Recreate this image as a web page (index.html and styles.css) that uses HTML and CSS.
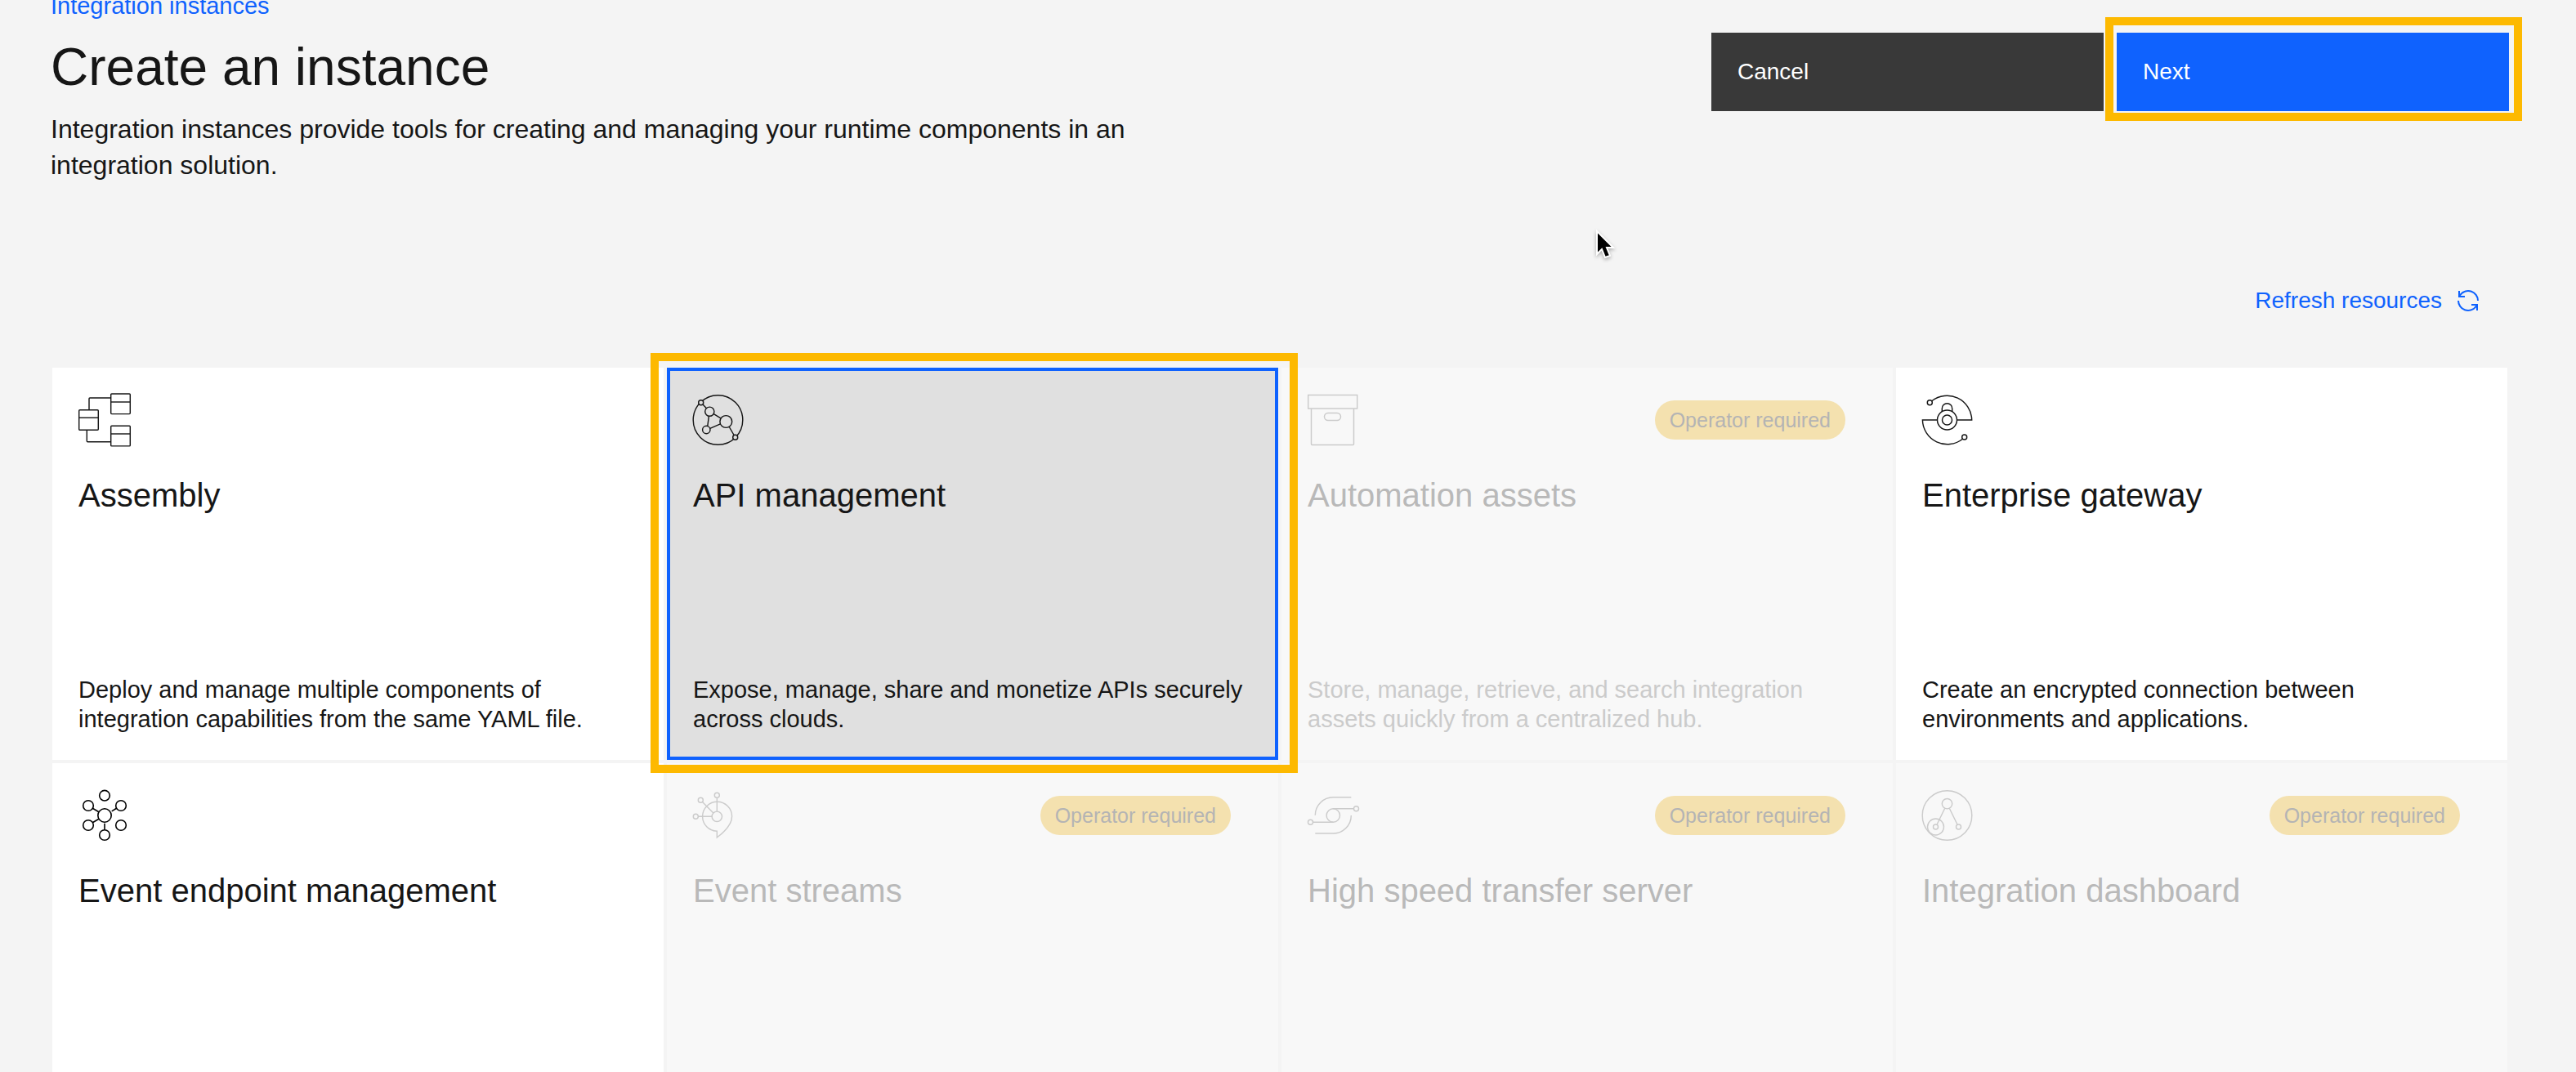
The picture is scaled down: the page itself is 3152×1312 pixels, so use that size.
FILE: index.html
```html
<!DOCTYPE html>
<html lang="en">
<head>
<meta charset="utf-8">
<title>Create an instance</title>
<link rel="stylesheet" href="styles.css">
</head>
<body>
<main class="page">
  <header class="header">
    <div class="intro">
      <nav class="breadcrumb"><a href="#">Integration instances</a></nav>
      <h1 class="title">Create an instance</h1>
      <p class="lead">Integration instances provide tools for creating and managing your runtime components in an integration solution.</p>
    </div>
    <div class="actions">
      <button class="btn btn-secondary" type="button">Cancel</button>
      <div class="spot">
        <button class="btn btn-primary" type="button">Next</button>
        <span class="frame frame-button"></span>
      </div>
    </div>
  </header>

  <div class="toolbar">
    <button class="refresh" type="button">
      Refresh resources
      <svg class="refresh-icon" viewBox="0 0 32 32" aria-hidden="true"><path d="M12,10H6.78A11,11,0,0,1,27,16h2A13,13,0,0,0,6,7.68V4H4v8h8Z"/><path d="M20,22h5.22A11,11,0,0,1,5,16H3a13,13,0,0,0,23,8.32V28h2V20H20Z"/></svg>
    </button>
  </div>

  <section class="tiles">
    <button class="tile" type="button">
      <span class="tile-top">
        <svg class="icon" viewBox="0 0 64 64" aria-hidden="true">
          <rect x=".7" y="19.7" width="23.6" height="24.6" rx="1"/><path d="M.7 29.3h23.6"/>
          <rect x="39.7" y="0" width="23.6" height="24.6" rx="1"/><path d="M39.7 10h23.6"/>
          <rect x="39.7" y="39.3" width="23.6" height="24.6" rx="1"/><path d="M39.7 49h23.6"/>
          <path d="M13 19.7V6q0-1 1-1h25.7M10.3 44.3v13.4q0 1 1 1h28.4"/>
        </svg>
      </span>
      <span class="tile-title">Assembly</span>
      <span class="tile-text">Deploy and manage multiple components of integration capabilities from the same YAML file.</span>
    </button>

    <div class="spot">
      <button class="tile tile-selected" type="button" aria-pressed="true">
        <span class="tile-top">
          <svg class="icon" viewBox="0 0 64 64" aria-hidden="true">
            <circle cx="30.5" cy="32" r="30.3"/>
            <path d="M12 13l4.3 4.4M25.3 24.6l8.6 5.2M19.4 27.3l-1.6 12M20.8 42.4l12.6-5.6M44.3 40.5l5.8 10"/>
            <circle class="node" cx="9.7" cy="10.7" r="3"/>
            <circle cx="20.3" cy="21.7" r="5.6"/>
            <circle cx="40.3" cy="34" r="7.4"/>
            <circle cx="16.3" cy="44" r="4.7"/>
            <circle class="node" cx="51.7" cy="53.3" r="3"/>
          </svg>
        </span>
        <span class="tile-title">API management</span>
        <span class="tile-text">Expose, manage, share and monetize APIs securely across clouds.</span>
      </button>
      <span class="frame frame-tile"></span>
    </div>

    <button class="tile" type="button" disabled>
      <span class="tile-top">
        <svg class="icon" viewBox="0 0 64 64" aria-hidden="true">
          <rect x=".7" y="1.5" width="60" height="16.5"/>
          <path d="M4.5 18v43.5q0 1 1 1h50q1 0 1-1V18"/>
          <rect x="20.5" y="23.5" width="20" height="9" rx="4.5"/>
        </svg>
        <span class="tag">Operator required</span>
      </span>
      <span class="tile-title">Automation assets</span>
      <span class="tile-text">Store, manage, retrieve, and search integration assets quickly from a centralized hub.</span>
    </button>

    <button class="tile" type="button">
      <span class="tile-top">
        <svg class="icon" viewBox="0 0 64 64" aria-hidden="true">
          <path d="M11.7 8.7A30.3 30.3 0 0 1 60.7 32H42.5M18.5 32H.4A30.3 30.3 0 0 0 49.5 55.2"/>
          <circle cx="30.5" cy="32" r="12"/><circle cx="30.5" cy="32" r="6"/>
          <path d="M24.3 21.5v-3.6a6.2 6.2 0 0 1 12.4 0v3.6"/>
          <circle cx="9.3" cy="10.7" r="3"/><circle cx="51.7" cy="53" r="3"/>
        </svg>
      </span>
      <span class="tile-title">Enterprise gateway</span>
      <span class="tile-text">Create an encrypted connection between environments and applications.</span>
    </button>

    <button class="tile" type="button">
      <span class="tile-top">
        <svg class="icon icon-bold" viewBox="0 0 64 64" aria-hidden="true">
          <circle cx="32" cy="32" r="8.2"/><circle cx="32" cy="7.7" r="6.3"/>
          <circle cx="12" cy="20" r="6.3"/><circle cx="52" cy="20" r="6.3"/>
          <circle cx="12" cy="44" r="6.3"/><circle cx="52" cy="44" r="6.3"/>
          <circle cx="32" cy="56" r="6.3"/>
          <path d="M17.3 23.3l7.7 4.4M40.7 26.9l5.8-3.6M17.3 40.7l7.7-4.4M32 41.7v8"/>
        </svg>
      </span>
      <span class="tile-title">Event endpoint management</span>
    </button>

    <button class="tile" type="button" disabled>
      <span class="tile-top">
        <svg class="icon" viewBox="0 0 64 64" aria-hidden="true">
          <path d="M29.3 51.3A18 18 0 1 1 47.6 33.3C47.6 43 40 51 29.3 59z"/>
          <circle cx="29.3" cy="33.3" r="6.2"/>
          <path d="M29.3 10.3v16.8M11.5 15.5l13.4 13.4M6.3 33.3h16.8"/>
          <circle cx="29.3" cy="7.3" r="3"/><circle cx="9.3" cy="13.3" r="3"/><circle cx="3.3" cy="33.3" r="3"/>
        </svg>
        <span class="tag">Operator required</span>
      </span>
      <span class="tile-title">Event streams</span>
    </button>

    <button class="tile" type="button" disabled>
      <span class="tile-top">
        <svg class="icon" viewBox="0 0 64 64" aria-hidden="true">
          <path d="M9.3 31.7a22 22 0 0 1 22-22h22M53.3 32a22 22 0 0 1-22 22h-22"/>
          <circle cx="31.3" cy="32" r="8.2"/>
          <path d="M31.3 23.8h25.2M6.6 40.2h24.7"/>
          <circle cx="59.5" cy="23.8" r="3"/><circle cx="3.5" cy="40.2" r="3"/>
        </svg>
        <span class="tag">Operator required</span>
      </span>
      <span class="tile-title">High speed transfer server</span>
    </button>

    <button class="tile" type="button" disabled>
      <span class="tile-top">
        <svg class="icon" viewBox="0 0 64 64" aria-hidden="true">
          <circle cx="30.5" cy="32" r="30.3"/><circle cx="30.5" cy="17.7" r="6.2"/>
          <circle cx="16.5" cy="46" r="10"/><circle cx="16.5" cy="46" r="3"/><circle cx="44.5" cy="46" r="3"/>
          <path d="M27.7 23.3L18 43.2M33.3 23.3l9.8 19.9"/>
        </svg>
        <span class="tag">Operator required</span>
      </span>
      <span class="tile-title">Integration dashboard</span>
    </button>
  </section>
</main>
<svg class="pointer" viewBox="0 0 28 42" aria-hidden="true"><path d="M3 4v28l6-6 4 10 6-2-4-10h8z"/></svg>
</body>
</html>
```
FILE: styles.css
```css
* { box-sizing: border-box; }

body {
  margin: 0;
  background: #f4f4f4;
  color: #161616;
  font-family: "Liberation Sans", Arial, sans-serif;
  font-size: 28px;
  line-height: 36px;
}

button {
  margin: 0;
  border: 0;
  font: inherit;
  color: inherit;
  text-align: left;
  cursor: pointer;
}

.page {
  height: 100vh;
  overflow: hidden;
}

/* Header */
.header {
  display: flex;
  justify-content: space-between;
  align-items: flex-start;
  gap: 64px;
  padding: 0 82px 0 62px;
}

.breadcrumb { font-size: 29px; line-height: 14px; }
.breadcrumb a { color: #0f62fe; text-decoration: none; }

.title {
  margin: 28px 0 14px;
  font-size: 64px;
  font-weight: 400;
  line-height: 80px;
}

.lead {
  max-width: 1380px;
  margin: 0;
  font-size: 32px;
  line-height: 44px;
}

.actions {
  display: flex;
  gap: 16px;
  padding-top: 40px;
}

.btn {
  display: block;
  width: 480px;
  height: 96px;
  padding: 0 32px;
  color: #fff;
}
.btn-secondary { background: #393939; }
.btn-primary { background: #0f62fe; }

/* Highlight frames drawn round a control */
.spot { position: relative; display: grid; }

.frame {
  position: absolute;
  border: 10px solid #fdb900;
  pointer-events: none;
  z-index: 1;
}
.frame-button { inset: -19px -16px -12px -14px; }
.frame-tile { inset: -18px -24px -16px -20px; }

/* Toolbar */
.toolbar {
  display: flex;
  justify-content: flex-end;
  margin: 112px 84px 50px 64px;
}

.refresh {
  display: flex;
  align-items: center;
  gap: 16px;
  height: 64px;
  padding: 0 32px;
  background: none;
  color: #0f62fe;
}
.refresh-icon { width: 32px; height: 32px; fill: currentColor; }

/* Tiles */
.tiles {
  display: grid;
  grid-template-columns: repeat(4, 1fr);
  grid-auto-rows: minmax(480px, auto);
  gap: 4px;
  margin: 0 84px 0 64px;
}

.tile {
  display: flex;
  flex-direction: column;
  padding: 32px;
  background: #fff;
}
.tile-selected {
  background: #e0e0e0;
  box-shadow: inset 0 0 0 4px #0f62fe;
}
.tile:disabled {
  background: #f8f8f8;
  color: #b9b9b9;
  cursor: not-allowed;
}

.tile-top {
  display: flex;
  justify-content: space-between;
  align-items: center;
  align-self: stretch;
  padding-right: 26px;
}

.icon {
  width: 64px;
  height: 64px;
  overflow: visible;
  fill: none;
  stroke: currentColor;
  stroke-width: 1.44;
}
.icon-bold { stroke: #000; stroke-width: 1.6; }
.tile-selected .node { fill: #e0e0e0; }
.tile:disabled .icon { stroke: #cbcbcb; }

.tag {
  padding: 6px 18px;
  border-radius: 24px;
  background: #f4e1af;
  color: #b4b4b4;
  font-size: 25px;
}

.tile-title {
  margin-top: 36px;
  font-size: 40px;
  line-height: 48px;
}

.tile-text { margin-top: auto; font-size: 29px; }
.tile:disabled .tile-text { color: #cbcbcb; }

/* Mouse pointer */
.pointer {
  position: absolute;
  left: 1951px;
  top: 279px;
  width: 28px;
  height: 42px;
  fill: #000;
  stroke: #fff;
  stroke-width: 2;
  filter: drop-shadow(0 2px 2px rgba(0, 0, 0, .3));
}
```
